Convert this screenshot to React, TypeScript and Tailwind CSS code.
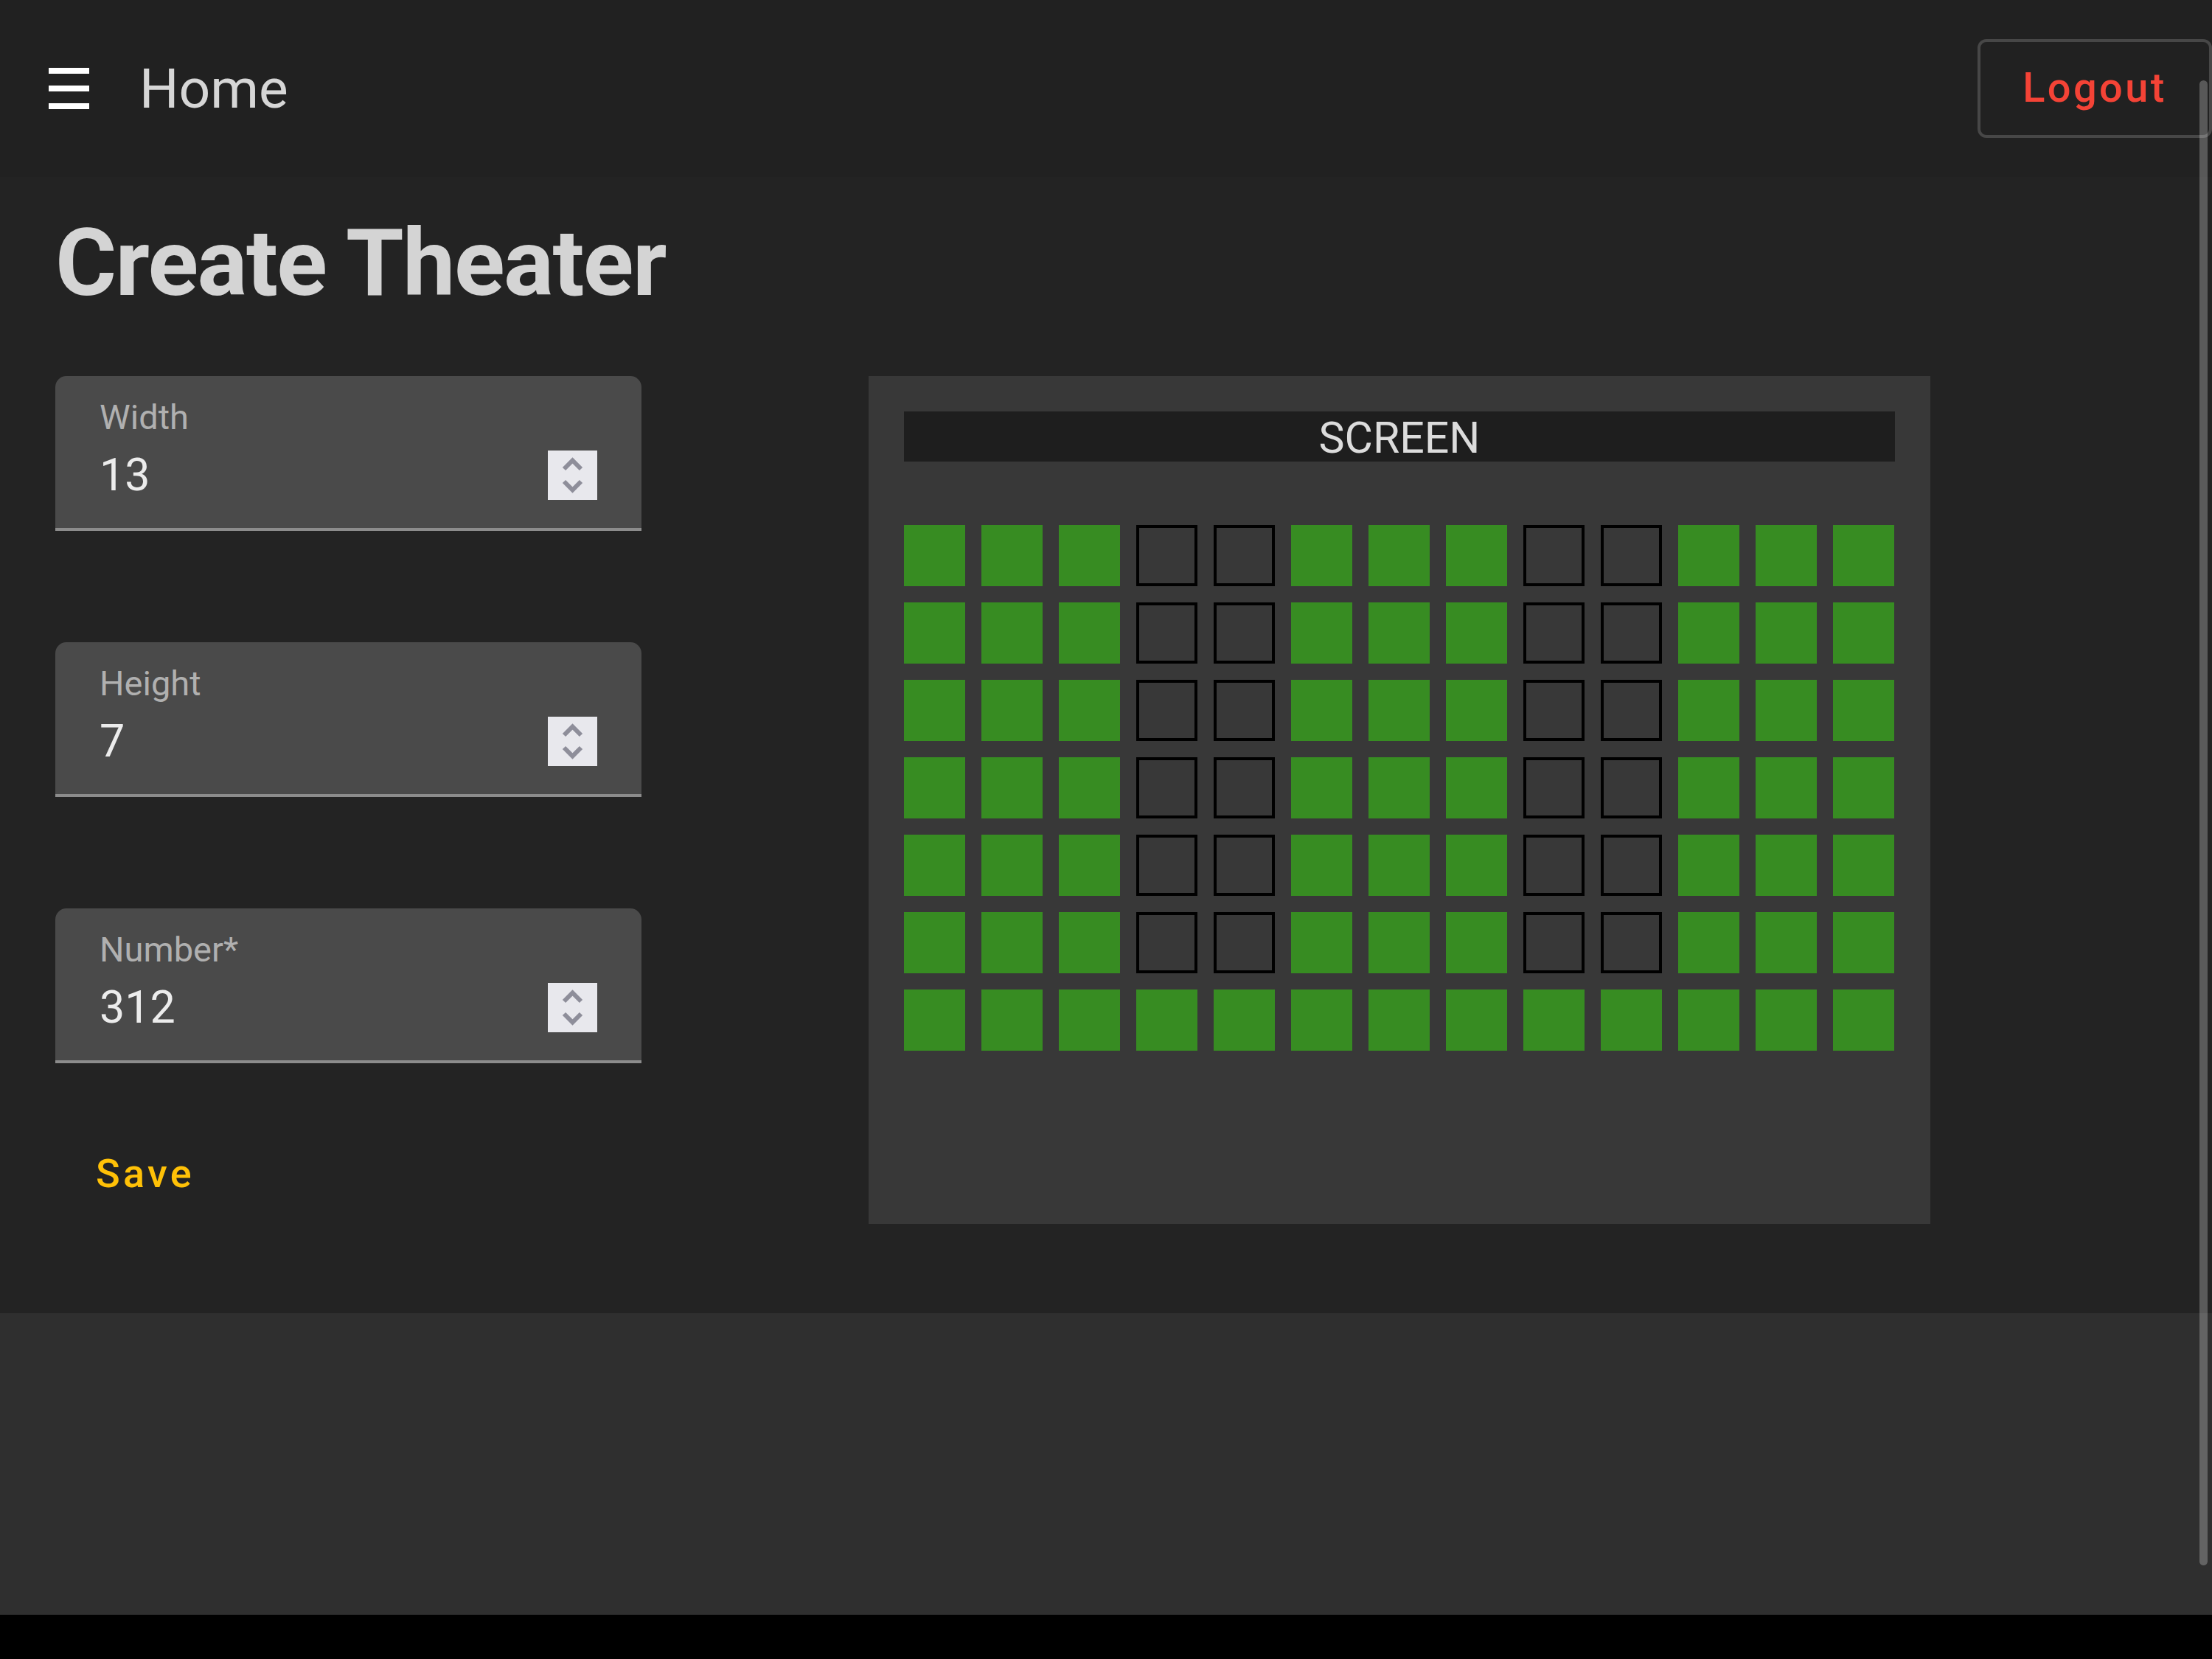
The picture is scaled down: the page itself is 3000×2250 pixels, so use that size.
import { type ReactNode } from 'react';

// seat map: 13 x 7, columns 4,5 and 9,10 are aisles except on the last row
const COLS = 13;
const ROWS = 7;
const AISLES = [3, 4, 8, 9];

function isSeat(row: number, col: number): boolean {
  if (row === ROWS - 1) return true;
  return !AISLES.includes(col);
}

function Spinner() {
  return (
    <div className="w-[67px] h-[67px] bg-[#e8e8ed] flex items-center justify-center">
      <svg width="67" height="67" viewBox="0 0 67 67" fill="none">
        <path d="M22 25 L33.5 13.5 L45 25" stroke="#8e8e9a" strokeWidth="6" />
        <path d="M22 42 L33.5 53.5 L45 42" stroke="#8e8e9a" strokeWidth="6" />
      </svg>
    </div>
  );
}

function NumberField({ label, value }: { label: ReactNode; value: string }) {
  return (
    <div className="h-[210px] bg-[#4a4a4a] rounded-t-[15px] border-b-4 border-[#8c8c8c] pt-[32px] px-[60px]">
      <div className="text-[47px] leading-none text-[#b0b0b0]">{label}</div>
      <div className="mt-[22px] h-[67px] flex items-center justify-between">
        <span className="text-[61px] leading-none text-[#ececec]">{value}</span>
        <Spinner />
      </div>
    </div>
  );
}

function SeatMap() {
  return (
    <div className="ml-[308px] w-[1440px] h-[1150px] bg-[#383838] p-[48px]">
      <div className="h-[68px] bg-[#1e1e1e] text-center text-[59px] leading-[71px] text-[#dcdcdc]">
        SCREEN
      </div>
      <div className="mt-[86px] grid grid-cols-[repeat(13,83px)] gap-[22px]">
        {Array.from({ length: ROWS * COLS }, (_, i) => {
          const row = Math.floor(i / COLS);
          const col = i % COLS;
          return isSeat(row, col) ? (
            <div key={i} className="w-[83px] h-[83px] bg-[#378c22]" />
          ) : (
            <div key={i} className="w-[83px] h-[83px] border-4 border-black" />
          );
        })}
      </div>
    </div>
  );
}

export default function App() {
  return (
    <div
      className="relative w-[3000px] h-[2250px] overflow-hidden bg-black"
      style={{ fontFamily: 'Roboto, "Noto Sans", sans-serif' }}
    >
      <header className="h-[240px] bg-[#212121] flex items-center justify-between">
        <div className="flex items-center">
          <div className="ml-[66px] flex flex-col gap-4">
            <div className="w-[55px] h-[8px] bg-white" />
            <div className="w-[55px] h-[8px] bg-white" />
            <div className="w-[55px] h-[8px] bg-white" />
          </div>
          <span className="ml-[68px] text-[75px] leading-none text-[#d6d6d6]">Home</span>
        </div>
        <button className="w-[318px] h-[134px] border-4 border-[#474747] rounded-[12px] pb-[2px] text-[56px] leading-none font-medium tracking-[0.06em] text-[#f44336]">
          Logout
        </button>
      </header>

      <main className="h-[1541px] bg-[#232323] px-[75px]">
        <h1 className="pt-[53px] text-[127px] leading-none font-bold tracking-[-0.012em] text-[#d4d4d4]">
          Create Theater
        </h1>
        <div className="mt-[90px] flex items-start">
          <div className="w-[795px] flex flex-col">
            <div className="flex flex-col gap-[151px]">
              <NumberField label="Width" value="13" />
              <NumberField label="Height" value="7" />
              <NumberField label="Number*" value="312" />
            </div>
            <button className="mt-[123px] ml-[55px] self-start text-[54px] leading-none font-medium tracking-[0.08em] text-[#ffc107]">
              Save
            </button>
          </div>
          <SeatMap />
        </div>
      </main>

      <div className="h-[409px] bg-[#2f2f2f]" />

      <div className="absolute right-[6px] top-[109px] w-[11px] h-[2014px] rounded-full bg-white/25" />
    </div>
  );
}
